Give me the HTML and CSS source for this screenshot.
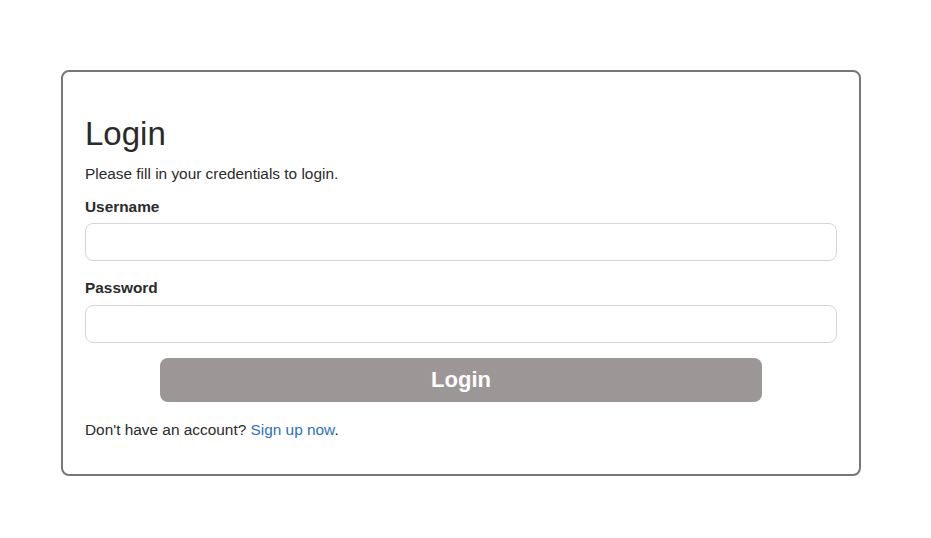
FILE: index.html
```html
<!DOCTYPE html>
<html lang="en">
<head>
<meta charset="utf-8">
<title>Login</title>
<link rel="stylesheet" href="styles.css">
</head>
<body>
<div class="wrapper">
  <h2 class="title">Login</h2>
  <p class="intro">Please fill in your credentials to login.</p>
  <form class="form">
    <div class="group">
      <label class="label">Username</label>
      <input class="control" type="text">
    </div>
    <div class="group">
      <label class="label">Password</label>
      <input class="control" type="password">
    </div>
    <div class="actions">
      <button class="btn" type="button">Login</button>
    </div>
    <p class="signup">Don't have an account? <a class="link" href="#">Sign up now</a>.</p>
  </form>
</div>
</body>
</html>
```
FILE: styles.css
```css
html, body {
  margin: 0;
  padding: 0;
  background: #fff;
}
body {
  font-family: "Liberation Sans", Arial, sans-serif;
  font-size: 15.4px;
  line-height: 1.5;
  color: #2b2b2b;
  padding-top: 70px;
}
.wrapper {
  box-sizing: border-box;
  width: 800px;
  margin-left: 61px;
  border: 2px solid #777;
  border-radius: 8px;
  padding: 42px 22px 33px 22px;
}
.title {
  margin: 0 0 8px 0;
  font-size: 33px;
  font-weight: 400;
  line-height: 1.2;
}
.intro {
  margin: 0 0 10px 0;
}
.form {
  margin: 0;
}
.group {
  display: flex;
  flex-direction: column;
  margin-bottom: 15px;
}
.label {
  font-weight: 700;
  margin-bottom: 5.5px;
}
.control {
  box-sizing: border-box;
  height: 38px;
  width: 100%;
  border: 1px solid #d6d6d6;
  border-radius: 8px;
  padding: 6px 12px;
  font: inherit;
  background: #fff;
}
.actions {
  display: flex;
  justify-content: center;
  margin-top: 1px;
}
.btn {
  width: 80%;
  height: 44px;
  padding-top: 2px;
  border: none;
  border-radius: 8px;
  background: #9c9696;
  color: #fff;
  font-family: inherit;
  font-size: 22px;
  font-weight: 700;
}
.signup {
  margin: 16px 0 0 0;
}
.link {
  color: #2c6fc7;
  text-decoration: none;
}
```
